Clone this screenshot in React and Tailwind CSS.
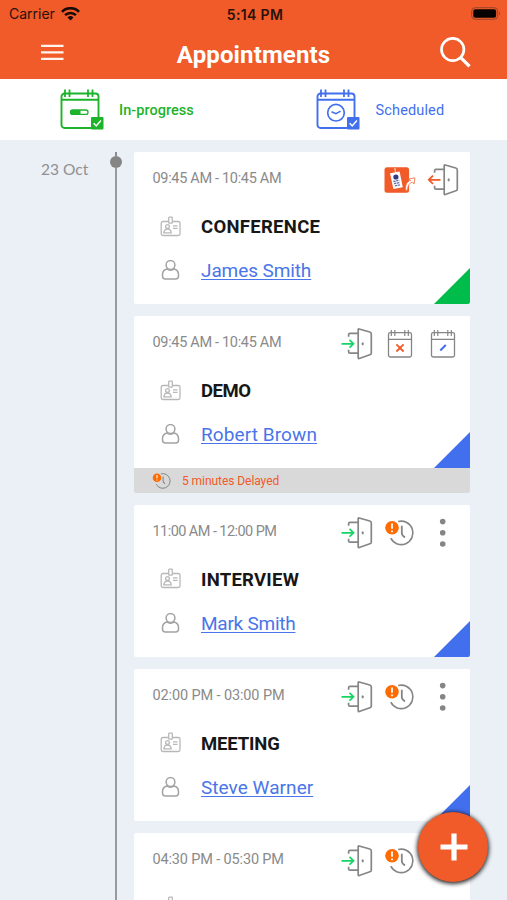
const appointments = [
  { time: '09:45 AM - 10:45 AM', timeClass: 'tracking-[-0.32px]', title: 'CONFERENCE', titleClass: 'tracking-[0.3px]', name: 'James Smith', nameClass: 'tracking-[-0.1px]', actions: ['badge', 'out'], status: 'progress' },
  { time: '09:45 AM - 10:45 AM', timeClass: 'tracking-[-0.32px]', title: 'DEMO', titleClass: 'tracking-[-0.5px]', name: 'Robert Brown', nameClass: 'tracking-[0.1px]', actions: ['in', 'cancel', 'edit'], status: 'scheduled', delay: '5 minutes Delayed' },
  { time: '11:00 AM - 12:00 PM', timeClass: 'tracking-[-0.56px]', title: 'INTERVIEW', titleClass: 'tracking-[0.25px]', name: 'Mark Smith', nameClass: 'tracking-[-0.25px]', actions: ['in', 'late', 'more'], status: 'scheduled' },
  { time: '02:00 PM - 03:00 PM', timeClass: 'tracking-[-0.12px]', title: 'MEETING', titleClass: 'tracking-[-0.15px]', name: 'Steve Warner', nameClass: 'tracking-[0.05px]', actions: ['in', 'late', 'more'], status: 'scheduled' },
  { time: '04:30 PM - 05:30 PM', timeClass: 'tracking-[-0.15px]', actions: ['in', 'late', 'more'], status: 'scheduled' },
];

function StatusCalendar({ children }) {
  return (
    <svg className="h-[42px] w-[44px]" viewBox="0 0 44 42" fill="none" stroke="currentColor" strokeWidth="1.9">
      <path d="M31 39H4.5a3 3 0 0 1-3-3V7.5a3 3 0 0 1 3-3h31a3 3 0 0 1 3 3v21M1.5 10.7h37" />
      <path d="M5 .5v7.5M9.5 .5v7.5M28 .5v7.5M32.5 .5v7.5" strokeWidth="1.8" />
      {children}
      <rect x="31" y="28" width="12.5" height="12.5" rx="1" fill="currentColor" stroke="none" />
      <path d="m33.7 34.3 2.5 2.6 4.7-5.3" stroke="white" strokeWidth="1.5" />
    </svg>
  );
}

function Door({ out }) {
  return (
    <svg className="h-8 w-8" viewBox="0 0 32 32" fill="none">
      <path d="M17.2 1.6c0-.5.5-.8 1-.6l10.6 3c1 .3 1.5.9 1.5 1.9v19c0 1-.5 1.6-1.4 1.9L18.2 30.5c-.6.2-1-.1-1-.7zM16.7 5.3H9q-1.4 0-1.4 1.4v2M16.7 25.2H9q-1.4 0-1.4-1.4v-2" stroke="#858585" strokeWidth="1.7" />
      <ellipse cx="21.7" cy="15.8" rx="1.1" ry="1.6" fill="#858585" />
      {out ? (
        <path d="M13.5 15.8H2M6 11.7l-4.2 4.1L6 19.9" stroke="#f15a29" strokeWidth="1.8" />
      ) : (
        <path d="M.5 15.8h11.8M8.5 11.9l4 3.9-4 3.9" stroke="#16d464" strokeWidth="1.7" />
      )}
    </svg>
  );
}

function SmallCalendar({ children }) {
  return (
    <svg className="h-8 w-8" viewBox="0 0 32 32" fill="none" stroke="#858585">
      <rect x="4.5" y="4.7" width="23" height="24.3" rx="1.8" strokeWidth="1.3" />
      <path d="M4.5 11.3h23" strokeWidth="1.2" />
      <path d="M7.3 2v6M10.8 2v6M20.8 2v6M24.3 2v6" strokeWidth="1.2" />
      {children}
    </svg>
  );
}

function LateClock({ className }) {
  return (
    <svg className={className} viewBox="0 0 32 32" fill="none">
      <path d="M14.2 4.6a11.7 11.7 0 1 1-7.4 16.6" stroke="#858585" strokeWidth="1.6" />
      <path d="M17.8 8.7v7.3q0 2.6 3.2 4.4" stroke="#858585" strokeWidth="1.8" />
      <circle cx="8" cy="10.8" r="6.8" fill="#ff6b00" />
      <path d="M8 6.5v5.2M8 13.4v1.8" stroke="white" strokeWidth="1.8" />
    </svg>
  );
}

function BadgeExit() {
  return (
    <svg className="h-8 w-8" viewBox="0 0 32 32" fill="none">
      <rect x=".5" y="3.2" width="24.6" height="25.6" rx="2.5" fill="#f15a29" />
      <path d="m10.8 4 1.1 6" stroke="#f7c3b2" strokeWidth="1.3" />
      <path d="m6 9.3 9.6-1.8 3.2 15.7-9.4 1.9z" fill="white" />
      <circle cx="11.9" cy="13" r="2.6" fill="#313b84" />
      <path d="m9.3 17.5 6-1.2M10 19.7l6-1.2M10.8 21.9l5.7-1.2" stroke="#6570aa" strokeWidth="1.3" strokeDasharray="2.3 .6" />
      <path d="M21.7 26.2c-.6-5.7 1.4-8.8 4.9-9.8l-2-1.5 6.4-1-1 6.1-1.5-2c-2.9.8-4.8 3.5-5 8.2z" fill="white" stroke="#f07850" strokeWidth=".9" />
    </svg>
  );
}

function Action({ type }) {
  if (type === 'badge') return <BadgeExit />;
  if (type === 'in' || type === 'out') return <Door out={type === 'out'} />;
  if (type === 'late') return <LateClock className="h-8 w-8" />;
  if (type === 'cancel') {
    return <SmallCalendar><path d="m12.4 16.3 7.2 7.2m0-7.2-7.2 7.2" stroke="#f15a29" strokeWidth="1.8" /></SmallCalendar>;
  }
  if (type === 'edit') {
    return <SmallCalendar><path d="m13.3 22.5 5.5-5.5" stroke="#426fee" strokeWidth="2" /></SmallCalendar>;
  }
  return (
    <svg className="h-8 w-8" viewBox="0 0 32 32" fill="#858585">
      <circle cx="15.7" cy="4.6" r="2.8" />
      <circle cx="15.7" cy="15.7" r="2.8" />
      <circle cx="15.7" cy="27" r="2.8" />
    </svg>
  );
}

function AppointmentCard({ item }) {
  return (
    <div className="shrink-0 overflow-hidden rounded-[2px] bg-white">
      <div className="relative h-[152.2px]">
        <div className="flex h-[56px] items-center justify-between pl-[18.5px] pr-[11px]">
          <span className={`whitespace-nowrap pb-[2px] text-[14.5px] text-[#8a8a8a] ${item.timeClass}`}>{item.time}</span>
          <div className="flex gap-[11px]">
            {item.actions.map((type) => <Action key={type} type={type} />)}
          </div>
        </div>
        <div className="flex h-[38px] items-center pl-[26px]">
          <svg className="mr-[20px] h-[21px] w-[21px] -translate-y-px" viewBox="0 0 21 21" fill="none" stroke="#b8b8b8" strokeWidth="1.3">
            <path d="M8 5.5H3A1.8 1.8 0 0 0 1.2 7.3v10.4a1.8 1.8 0 0 0 1.8 1.8h15.2a1.8 1.8 0 0 0 1.8-1.8V7.3a1.8 1.8 0 0 0-1.8-1.8H13" />
            <rect x="8.7" y="1.2" width="3.6" height="6" rx=".6" />
            <circle cx="7.5" cy="10.5" r="1.9" />
            <path d="M3.8 16.8c.2-2.4 1.5-3.7 3.7-3.7s3.5 1.3 3.7 3.7zM13 9.9h4.5M13 12.4h4.5" />
          </svg>
          {item.title && <span className={`pt-[2px] text-[18.5px] font-bold text-[#171717] ${item.titleClass}`}>{item.title}</span>}
        </div>
        <div className="flex h-[49px] items-center pl-[26px]">
          <svg className="mr-[20px] h-[21px] w-[21px] -translate-y-[0.5px]" viewBox="0 0 21 21" fill="none" stroke="#a3a3a3" strokeWidth="1.5">
            <circle cx="10.5" cy="5.5" r="4.4" />
            <path d="M6.7 9.5c-2.8.9-4.2 2.7-4.2 5.5v1.5c0 2 .9 3 2.9 3h10.2c2 0 2.9-1 2.9-3V15c0-2.8-1.4-4.6-4.2-5.5-2.1 1.7-5.5 1.7-7.6 0z" />
          </svg>
          {item.name && <span className={`pt-[2px] text-[19px] text-[#4a75ea] underline decoration-1 underline-offset-2 ${item.nameClass}`}>{item.name}</span>}
        </div>
        <svg className={`absolute bottom-0 right-0 h-9 w-9 ${item.status === 'progress' ? 'text-[#00bd4b]' : 'text-[#426fee]'}`} viewBox="0 0 36 36">
          <path d="M36 0v36H0z" fill="currentColor" />
        </svg>
      </div>
      {item.delay && (
        <div className="flex h-[24.6px] items-center bg-[#d9d9d9] pl-[18px]">
          <LateClock className="mr-[10px] h-5 w-5" />
          <span className="pt-px text-[12px] tracking-[-0.06px] text-[#f15a29]">{item.delay}</span>
        </div>
      )}
    </div>
  );
}

export default function App() {
  return (
    <div className="relative flex h-[900px] w-[507px] flex-col overflow-hidden bg-[#ebeff6] font-[Roboto,sans-serif]">
      <header className="h-[79px] shrink-0 bg-[#f15a29]">
        <div className="grid h-[27px] grid-cols-3 items-center pl-[9px] pr-[6px] font-[Inter,sans-serif] text-[14px] text-[#28120b]">
          <div className="flex items-center gap-[6px]">
            <span>Carrier</span>
            <svg className="h-[14px] w-[19px]" viewBox="0 0 19 14" fill="none" stroke="#170b07" strokeWidth="2.6">
              <path d="M1 4.8a12 12 0 0 1 17 0M4.1 8.2a7.6 7.6 0 0 1 10.8 0" />
              <path d="m6.5 10.4 3 3 3-3a4.4 4.4 0 0 0-6 0z" fill="#170b07" stroke="none" />
            </svg>
          </div>
          <span className="whitespace-nowrap pt-px text-center text-[14px] font-semibold tracking-[0.35px]">5:14 PM</span>
          <svg className="h-[13px] w-[30px] justify-self-end" viewBox="0 0 30 13">
            <rect x=".7" y=".7" width="26" height="11.6" rx="3.5" fill="none" stroke="#98452a" />
            <rect x="2.3" y="2.2" width="22.8" height="8.6" rx="2" fill="#080302" />
            <path d="M28 4.5q2 2 0 4z" fill="#98452a" />
          </svg>
        </div>
        <div className="flex h-[52px] items-center justify-between pl-[40px] pr-[36px]">
          <svg className="h-6 w-6" viewBox="0 0 24 24" stroke="#fff5ee" strokeWidth="2.3">
            <path d="M1 4.8h22.5M1 11.3h22.5M1 17.8h22.5" />
          </svg>
          <h1 className="pl-1 pt-[3px] text-[24px] font-bold tracking-[0.13px] text-white">Appointments</h1>
          <svg className="h-8 w-8" viewBox="0 0 32 32" fill="none" stroke="white" strokeWidth="2.7">
            <circle cx="13.7" cy="12.5" r="11.2" />
            <path d="m21.5 20.4 9 9" strokeWidth="3.4" />
          </svg>
        </div>
      </header>

      <div className="flex h-[61px] shrink-0 items-center bg-white pl-[60px] text-[14.5px]">
        <div className="flex w-[256px] items-center gap-[15px] text-[#1db32b]">
          <StatusCalendar>
            <rect x="10.5" y="21" width="17.5" height="4.4" rx="2.2" strokeWidth="1.3" />
            <path d="M12.5 21h8v4.4h-8a2 2 0 0 1 0-4.4z" fill="currentColor" stroke="none" />
          </StatusCalendar>
          <span className="pt-[3px] font-medium tracking-[0.04px]">In-progress</span>
        </div>
        <div className="flex items-center gap-[15px] text-[#426fee]">
          <StatusCalendar>
            <circle cx="20" cy="23.7" r="8.3" strokeWidth="1.7" />
            <path d="m15.5 22.7 4.4 2 4.7-2.6" strokeWidth="1.5" />
          </StatusCalendar>
          <span className="pl-[0.5px] pt-[3px] tracking-[0.15px]">Scheduled</span>
        </div>
      </div>

      <main className="flex min-h-0 flex-1 pt-[12px]">
        <div className="w-[110px] shrink-0 pl-[41px] pt-[7px] font-[Lato,sans-serif] text-[15.5px] leading-5 text-[#909090]">23 Oct</div>
        <div className="flex w-[12px] shrink-0 flex-col items-center">
          <div className="h-1 w-[2px] shrink-0 bg-[#8d8d8d]" />
          <div className="h-[12px] w-[12px] shrink-0 rounded-full bg-[#858585]" />
          <div className="w-[2px] flex-1 bg-[#999a9d]" />
        </div>
        <div className="ml-[12px] flex w-[336px] flex-col gap-[11.9px]">
          {appointments.map((item, i) => <AppointmentCard key={i} item={item} />)}
        </div>
      </main>

      <button className="absolute left-[418px] top-[812px] flex h-[70px] w-[70px] items-center justify-center rounded-full bg-[#f15a29] pl-[2px] shadow-[0_1px_4px_1px_rgba(0,0,0,0.85)]">
        <svg className="h-7 w-7" viewBox="0 0 28 28" stroke="white" strokeWidth="5.2">
          <path d="M14 .5v27M.5 14h27" />
        </svg>
      </button>
    </div>
  );
}
